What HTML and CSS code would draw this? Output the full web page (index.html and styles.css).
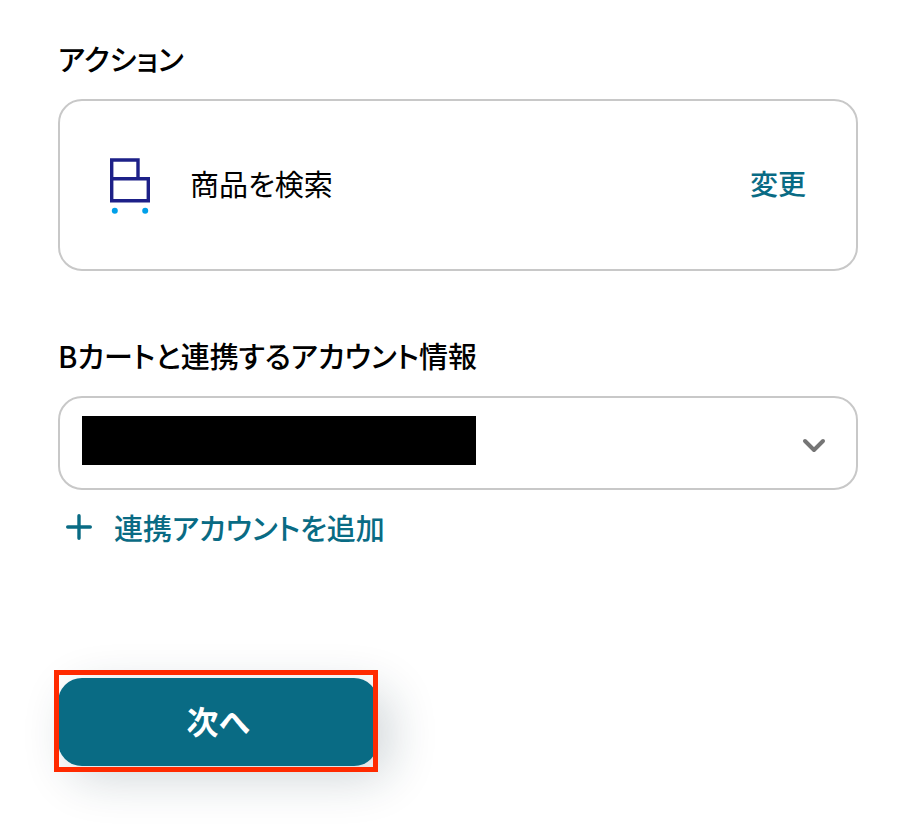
FILE: index.html
```html
<!DOCTYPE html>
<html lang="ja">
<head>
<meta charset="utf-8">
<meta name="viewport" content="width=device-width, initial-scale=1">
<title>アクション</title>
<link rel="stylesheet" href="styles.css">
</head>
<body>
<main class="page">
  <section class="section">
    <h2 class="heading">アクション</h2>
    <div class="card">
      <svg class="logo" viewBox="0 -2 42 62" aria-hidden="true">
        <path d="M1.7 24.7V6H28v18.7M1.7 24.7h36.6v22H1.7z" fill="none" stroke="#1d2088" stroke-width="3.4"/>
        <circle cx="4.8" cy="56.8" r="3" fill="#00a0e9"/>
        <circle cx="35.2" cy="56.8" r="3" fill="#00a0e9"/>
      </svg>
      <span class="card-title">商品を検索</span>
      <button class="text-button" type="button">変更</button>
    </div>
  </section>
  <form class="section">
    <label class="heading" for="account">Bカートと連携するアカウント情報</label>
    <div class="select">
      <select class="select-input" id="account"><option></option></select>
      <span class="redaction"></span>
      <svg class="chevron" viewBox="0 0 24 16" aria-hidden="true">
        <path d="M3 3l9 9 9-9" fill="none" stroke="#757575" stroke-width="4" stroke-linecap="round" stroke-linejoin="round"/>
      </svg>
    </div>
    <button class="text-button add" type="button">
      <svg class="plus" viewBox="0 0 26 26" aria-hidden="true">
        <path d="M13 1.7v22.6M1.7 13h22.6" fill="none" stroke="currentColor" stroke-width="3.4" stroke-linecap="round"/>
      </svg>
      連携アカウントを追加
    </button>
    <div class="submit">
      <button class="next" type="submit">次へ</button>
      <span class="highlight"></span>
    </div>
  </form>
</main>
</body>
</html>
```

FILE: styles.css
```css
* {
  box-sizing: border-box;
}

body {
  margin: 0;
  background: #fff;
  color: #000;
  font-family: "Noto Sans CJK JP", sans-serif;
  font-size: 29px;
  line-height: 40px;
  font-feature-settings: "palt";
}

button,
select {
  font: inherit;
  font-feature-settings: inherit;
}

.page {
  display: flex;
  flex-direction: column;
  gap: 64px;
  padding: 38px 66px 60px 58px;
}

.section {
  display: flex;
  flex-direction: column;
}

.heading {
  margin: 0 0 21px;
  font-size: 29px;
  font-weight: 500;
}

.card {
  display: flex;
  align-items: center;
  padding: 51px 50px 55px;
  border: 2px solid #c8c8c8;
  border-radius: 24px;
}

.logo {
  width: 42px;
  height: 62px;
}

.card-title {
  flex: 1;
  margin-left: 38px;
}

.text-button {
  padding: 0;
  border: 0;
  background: none;
  color: #096b84;
  font-size: 28px;
  font-weight: 500;
  cursor: pointer;
}

.select {
  position: relative;
}

.select-input {
  display: block;
  width: 100%;
  height: 94px;
  padding: 0 72px 0 22px;
  appearance: none;
  border: 2px solid #c8c8c8;
  border-radius: 24px;
  background: #fff;
}

.redaction {
  position: absolute;
  top: 20px;
  left: 24px;
  width: 394px;
  max-width: calc(100% - 96px);
  height: 49px;
  background: #000;
  pointer-events: none;
}

.chevron {
  position: absolute;
  top: 42px;
  right: 32px;
  width: 24px;
  height: 16px;
  pointer-events: none;
}

.add {
  display: flex;
  align-items: center;
  align-self: flex-start;
  gap: 22px;
  margin-top: 17px;
  padding-left: 8px;
  font-size: 29px;
}

.plus {
  width: 26px;
  height: 26px;
}

.submit {
  position: relative;
  align-self: flex-start;
  width: 320px;
  max-width: 100%;
  margin-top: 131px;
}

.next {
  display: block;
  width: 100%;
  padding: 22px 24px 26px;
  border: 0;
  border-radius: 24px;
  background: #096b84;
  box-shadow: 12px 12px 48px rgba(20, 50, 65, 0.2);
  color: #fff;
  font-size: 32px;
  font-weight: 700;
  cursor: pointer;
}

.highlight {
  position: absolute;
  inset: -8px 0 -6px -4px;
  border: 5px solid #ff2a00;
  pointer-events: none;
}
```
